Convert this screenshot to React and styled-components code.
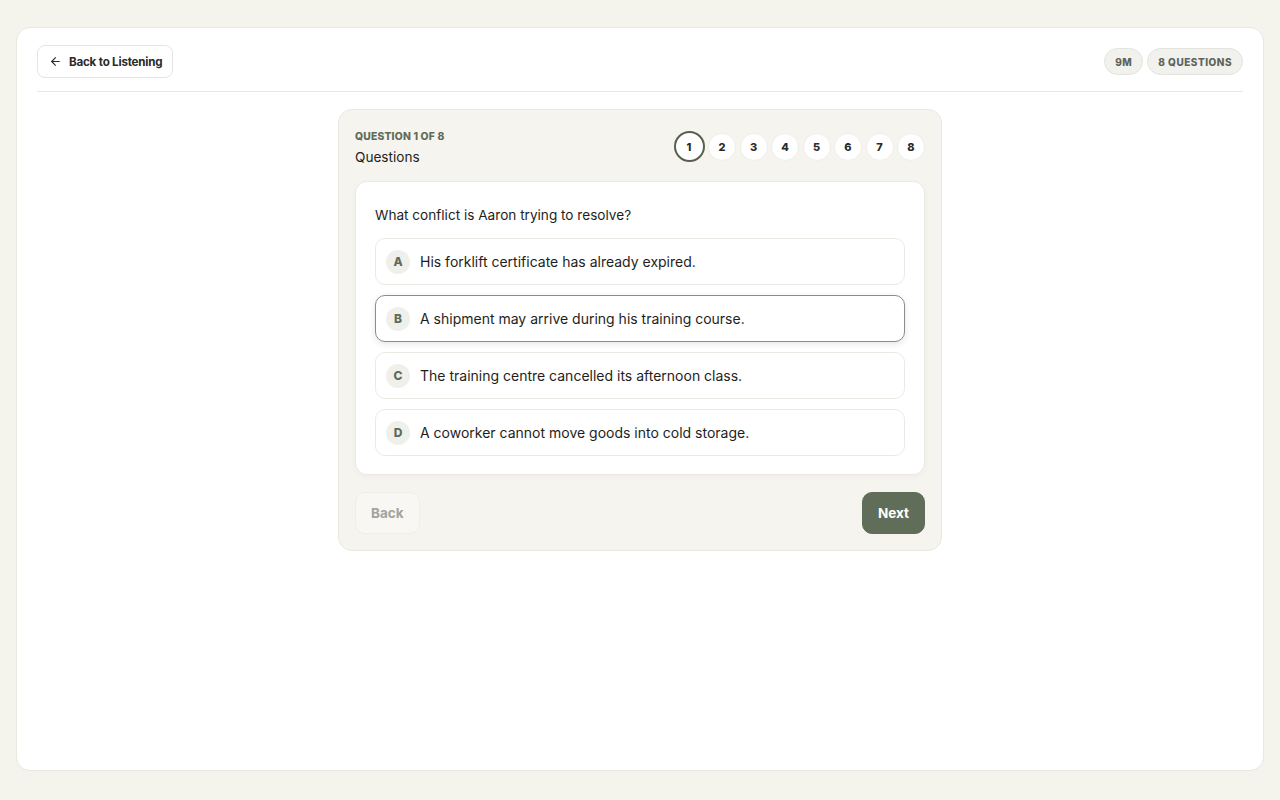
import React from 'react'
import styled, { createGlobalStyle } from 'styled-components'
import { ArrowLeft } from 'lucide-react'

const Global = createGlobalStyle`
  * { box-sizing: border-box; }
  body {
    margin: 0;
    background: #f4f3ec;
    font-family: Inter, "Noto Sans", sans-serif;
    color: #1e1e1c;
  }
`

const Page = styled.div`
  padding: 27px 16px 29px;
  height: 800px;
`

const Shell = styled.div`
  height: 100%;
  background: #fff;
  border: 1px solid #e9e8e1;
  border-radius: 14px;
  padding: 17px 20px;
`

const TopBar = styled.div`
  display: flex;
  justify-content: space-between;
  align-items: center;
  padding-bottom: 13px;
  border-bottom: 1px solid #e8e7e2;
`

const BackLink = styled.button`
  display: flex;
  align-items: center;
  gap: 7px;
  height: 33px;
  padding: 0 10px 0 11px;
  background: #fff;
  border: 1px solid #e6e5df;
  border-radius: 8px;
  font-family: inherit;
  font-size: 11.6px;
  font-weight: 700;
  letter-spacing: -0.2px;
  color: #2a2a28;
`

const Pills = styled.div`
  display: flex;
  gap: 4px;
`

const Pill = styled.span`
  display: flex;
  align-items: center;
  height: 27px;
  padding: 0 10px;
  background: #f1f1ee;
  border: 1px solid #e4e3de;
  border-radius: 14px;
  font-size: 10px;
  font-weight: 800;
  letter-spacing: 0.5px;
  color: #5d6459;
`

const Stage = styled.div`
  display: flex;
  justify-content: center;
  padding-top: 17px;
`

const Panel = styled.div`
  width: 604px;
  background: #f6f4ee;
  border: 1px solid #ebe8df;
  border-radius: 14px;
  padding: 21px 16px 16px;
`

const PanelHead = styled.div`
  display: flex;
  justify-content: space-between;
  align-items: flex-start;
  margin-bottom: 15px;
`

const Kicker = styled.div`
  font-size: 10.3px;
  line-height: 11px;
  font-weight: 800;
  letter-spacing: 0.2px;
  color: #5f6b5a;
  text-transform: uppercase;
`

const Title = styled.div`
  margin-top: 6px;
  font-size: 13.6px;
  line-height: 18px;
  color: #1e1e1c;
`

const Steps = styled.div`
  display: flex;
  align-items: center;
  gap: 3.5px;
`

const Step = styled.span`
  display: flex;
  align-items: center;
  justify-content: center;
  width: ${p => (p.$active ? 31 : 28)}px;
  height: ${p => (p.$active ? 31 : 28)}px;
  border-radius: 50%;
  background: #fff;
  border: ${p => (p.$active ? '2px solid #56604f' : '1px solid #efeee9')};
  font-size: 11px;
  font-weight: 800;
  color: #2a2a28;
`

const Card = styled.div`
  background: #fff;
  border: 1px solid #ebe9e2;
  border-radius: 12px;
  padding: 23px 19px 18px;
  box-shadow: 0 2px 6px rgba(0, 0, 0, 0.03);
`

const Prompt = styled.div`
  font-size: 13.6px;
  line-height: 20px;
  margin-bottom: 13px;
`

const Options = styled.div`
  display: flex;
  flex-direction: column;
  gap: 10px;
`

const Option = styled.div`
  display: flex;
  align-items: center;
  gap: 10px;
  height: 47px;
  padding: 0 10px;
  border-radius: 10px;
  border: 1px solid ${p => (p.$selected ? '#8c8c88' : '#ebeae5')};
  box-shadow: ${p => (p.$selected ? '0 2px 7px rgba(0,0,0,0.1)' : 'none')};
  background: #fff;
`

const Letter = styled.span`
  display: flex;
  align-items: center;
  justify-content: center;
  width: 24px;
  height: 24px;
  border-radius: 50%;
  background: #efefeb;
  font-size: 12px;
  font-weight: 800;
  color: #5f6b5a;
`

const OptionText = styled.span`
  font-size: 14px;
  color: #1e1e1c;
`

const Footer = styled.div`
  display: flex;
  justify-content: space-between;
  margin-top: 17px;
`

const NavButton = styled.button`
  height: 42px;
  padding: 0 15px;
  border-radius: 10px;
  font-family: inherit;
  font-size: 13.5px;
  font-weight: 700;
  border: 1px solid ${p => (p.$primary ? '#5f6d59' : '#efeee9')};
  background: ${p => (p.$primary ? '#5f6d59' : '#f8f7f3')};
  color: ${p => (p.$primary ? '#fff' : '#a3a3a0')};
`

const options = [
  ['A', 'His forklift certificate has already expired.'],
  ['B', 'A shipment may arrive during his training course.'],
  ['C', 'The training centre cancelled its afternoon class.'],
  ['D', 'A coworker cannot move goods into cold storage.'],
]

export default function App() {
  return (
    <>
      <Global />
      <Page>
        <Shell>
          <TopBar>
            <BackLink>
              <ArrowLeft size={13} strokeWidth={2} />
              Back to Listening
            </BackLink>
            <Pills>
              <Pill>9M</Pill>
              <Pill>8 QUESTIONS</Pill>
            </Pills>
          </TopBar>
          <Stage>
            <Panel>
              <PanelHead>
                <div>
                  <Kicker>Question 1 of 8</Kicker>
                  <Title>Questions</Title>
                </div>
                <Steps>
                  {[1, 2, 3, 4, 5, 6, 7, 8].map(n => (
                    <Step key={n} $active={n === 1}>{n}</Step>
                  ))}
                </Steps>
              </PanelHead>
              <Card>
                <Prompt>What conflict is Aaron trying to resolve?</Prompt>
                <Options>
                  {options.map(([l, t]) => (
                    <Option key={l} $selected={l === 'B'}>
                      <Letter>{l}</Letter>
                      <OptionText>{t}</OptionText>
                    </Option>
                  ))}
                </Options>
              </Card>
              <Footer>
                <NavButton>Back</NavButton>
                <NavButton $primary>Next</NavButton>
              </Footer>
            </Panel>
          </Stage>
        </Shell>
      </Page>
    </>
  )
}
